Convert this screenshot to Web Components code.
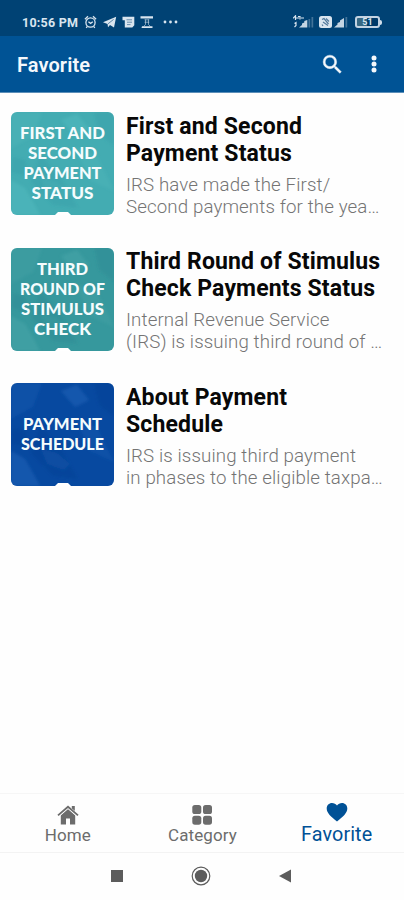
<!DOCTYPE html>
<html lang="en">
<head>
<meta charset="utf-8">
<meta name="viewport" content="width=device-width, initial-scale=1">
<title>Favorite</title>
<style>
    html, body {
        margin: 0;
        height: 100%;
        background: #fefefe;
    }

    body {
        font-family: Roboto, sans-serif;
        overflow: hidden;
    }
</style>
</head>
<body>
<phone-screen>
    <status-bar slot="top" time="10:56 PM" battery="51"></status-bar>
    <app-bar slot="top" heading="Favorite"></app-bar>

    <article-row>
        <article-thumb slot="thumb" theme="teal" lines="FIRST AND:85|SECOND:69|PAYMENT:78|STATUS:62"></article-thumb>
        <span slot="title">First and Second<br>Payment Status</span>
        <span slot="text">IRS have made the First/<br>Second payments for the yea…</span>
    </article-row>
    <article-row>
        <article-thumb slot="thumb" theme="green" lines="THIRD:51|ROUND OF:85|STIMULUS:83|CHECK:57"></article-thumb>
        <span slot="title">Third Round of Stimulus<br>Check Payments Status</span>
        <span slot="text">Internal Revenue Service<br>(IRS) is issuing third round of …</span>
    </article-row>
    <article-row>
        <article-thumb slot="thumb" theme="blue" lines="PAYMENT:79|SCHEDULE:83"></article-thumb>
        <span slot="title">About Payment<br>Schedule</span>
        <span slot="text">IRS is issuing third payment<br>in phases to the eligible taxpa…</span>
    </article-row>

    <tab-bar slot="bottom">
        <tab-item icon="home">Home</tab-item>
        <tab-item icon="grid">Category</tab-item>
        <tab-item icon="heart" active>Favorite</tab-item>
    </tab-bar>
    <system-nav slot="bottom"></system-nav>
</phone-screen>

<script>
class PhoneScreen extends HTMLElement {
    constructor() {
        super();
        this.attachShadow({ mode: 'open' }).innerHTML = `
            <style>
                :host {
                    display: flex;
                    flex-direction: column;
                    height: 100vh;
                }

                main {
                    flex: 1;
                    min-height: 0;
                    padding: 19px 11px 0;
                }
            </style>
            <slot name="top"></slot>
            <main><slot></slot></main>
            <slot name="bottom"></slot>
        `;
    }
}

class StatusBar extends HTMLElement {
    constructor() {
        super();
        this.attachShadow({ mode: 'open' }).innerHTML = `
            <style>
                :host {
                    display: flex;
                    justify-content: space-between;
                    align-items: center;
                    box-sizing: border-box;
                    height: 36px;
                    padding: 8px 22px 0 22px;
                    background: #004274;
                    color: #d9e5ef;
                }

                .side {
                    display: flex;
                    align-items: center;
                }

                .time {
                    width: 62px;
                    font-size: 12.5px;
                    font-weight: 700;
                    letter-spacing: 0.25px;
                    white-space: nowrap;
                }

                svg {
                    display: block;
                    fill: currentColor;
                }

                .battery {
                    display: flex;
                    align-items: center;
                    margin-left: 5px;
                }

                .level {
                    box-sizing: border-box;
                    width: 25px;
                    height: 12px;
                    border: 2px solid #c3d3e2;
                    border-radius: 3px;
                    background: linear-gradient(90deg, #376984 50%, #003a68 50%);
                    font-size: 9px;
                    font-weight: 700;
                    line-height: 8px;
                    text-align: center;
                }

                .tip {
                    width: 2px;
                    height: 5px;
                    background: #d0deea;
                    border-radius: 0 2px 2px 0;
                }
            </style>
            <div class="side">
                <div class="time"></div>
                <svg width="96" height="14" viewBox="0 0 96 14">
                    <g fill="none" stroke="currentColor" stroke-width="1.3">
                        <circle cx="6.5" cy="7.5" r="4.6"/>
                        <path d="M.9 4.2 4 1.3M12.1 4.2 9 1.3M4.4 6.8l2.2 1.6 2.2-1.6M3.4 11.4l-1.2 1.5M9.6 11.4l1.2 1.5"/>
                    </g>
                    <path d="M19 7.3 32.2 1.7 30 12.4l-4-2.3-2 2.1-.4-3.2z"/>
                    <path d="M24 8.8 29.6 4.4" stroke="#285d87" stroke-width=".7"/>
                    <path d="M38.5 1.8h11.8v8.4l-2 2.4h-7.5V5.2h-2.3z"/>
                    <path d="M42.5 4.8h5.5M43 7.2h5M43 9.6h3.5" stroke="#5b84a6" stroke-width=".9"/>
                    <path d="M56.5 1.2H69v2.4H56.5zM58 11.2h10.5V13h-11z"/>
                    <path d="M60.5 4.8h4.8M60.5 7.2h4.8M61.5 4.5v5l-2 2M64.5 4.5v5l2 2" fill="none" stroke="currentColor" stroke-width=".8" opacity=".7"/>
                    <circle cx="81" cy="7" r="1.4"/>
                    <circle cx="86.5" cy="7" r="1.4"/>
                    <circle cx="92" cy="7" r="1.4"/>
                </svg>
            </div>
            <div class="side">
                <svg width="57" height="14" viewBox="0 0 57 14">
                    <path d="M0 3.3 2.5.8V5M3 3h3M5 1.5h2v3M8 3h3M1.5 8.5 3 7.5v3L1.5 12" fill="none" stroke="currentColor" stroke-width="1.2"/>
                    <path d="M6 12.5 9 10V8.5l2.300-1V6l3-1v7.5zM41 12.5l3.500-3V8l2.500-1V5.5L51 3v9.500z" opacity=".9"/>
                    <path d="M15.5 12.5h1.7V4h-1.7zM18.5 12.5h1.7V2h-1.7zM52.5 12.5h1.7V2h-1.7z" opacity=".3"/>
                    <rect x="26" y="1" width="13" height="12" rx="2.5"/>
                    <path d="M29 4.5l2-1 4.5 5.5M30 7l5 3.5M29 9.5l1 1.5M33 3.5l3 3" fill="none" stroke="#52799b" stroke-width="1.2"/>
                </svg>
                <div class="battery"><div class="level"></div><div class="tip"></div></div>
            </div>
        `;
    }

    connectedCallback() {
        this.shadowRoot.querySelector('.time').textContent = this.getAttribute('time');
        this.shadowRoot.querySelector('.level').textContent = this.getAttribute('battery');
    }
}

class AppBar extends HTMLElement {
    constructor() {
        super();
        this.attachShadow({ mode: 'open' }).innerHTML = `
            <style>
                :host {
                    display: flex;
                    align-items: center;
                    box-sizing: border-box;
                    height: 57px;
                    padding: 0 18px 0 17px;
                    background: #005395;
                    border-bottom: 1px solid #5c8fb9;
                    color: #f4f8fc;
                }

                h1 {
                    flex: 1;
                    margin: 0;
                    padding-top: 2px;
                    font-size: 20px;
                    font-weight: 600;
                    letter-spacing: 0.1px;
                }

                svg {
                    display: block;
                }

                .search {
                    margin-right: 17px;
                }
            </style>
            <h1></h1>
            <svg class="search" width="25" height="25" viewBox="0 0 24 24" fill="currentColor" stroke="currentColor" stroke-width=".4">
                <path d="M15.5 14h-.79l-.28-.27A6.47 6.47 0 0 0 16 9.5 6.5 6.5 0 1 0 9.5 16c1.61 0 3.09-.59 4.23-1.57l.27.28v.79l5 4.99L20.49 19l-4.99-5zm-6 0A4.49 4.49 0 0 1 5 9.5 4.49 4.49 0 0 1 9.5 5 4.49 4.49 0 0 1 14 9.5 4.49 4.49 0 0 1 9.5 14z"/>
            </svg>
            <svg width="24" height="24" viewBox="0 0 24 24" fill="currentColor">
                <circle cx="12" cy="6" r="2.5"/>
                <circle cx="12" cy="12" r="2.5"/>
                <circle cx="12" cy="18" r="2.5"/>
            </svg>
        `;
    }

    connectedCallback() {
        this.shadowRoot.querySelector('h1').textContent = this.getAttribute('heading');
    }
}

class ArticleRow extends HTMLElement {
    constructor() {
        super();
        this.attachShadow({ mode: 'open' }).innerHTML = `
            <style>
                :host {
                    display: flex;
                    gap: 12px;
                    height: 135.5px;
                }

                .body {
                    padding-top: 0.6px;
                    white-space: nowrap;
                }

                .title {
                    color: #080808;
                    font-size: 23px;
                    font-weight: 700;
                    line-height: 27.3px;
                    letter-spacing: 0.15px;
                }

                .text {
                    margin-top: 6.8px;
                    color: #747474;
                    font-size: 18.7px;
                    font-weight: 350;
                    line-height: 22px;
                    letter-spacing: 0.12px;
                }
            </style>
            <slot name="thumb"></slot>
            <div class="body">
                <div class="title"><slot name="title"></slot></div>
                <div class="text"><slot name="text"></slot></div>
            </div>
        `;
    }
}

const THEMES = {
    teal: ['#43acb2', '#55bcc0', '#369ca5'],
    green: ['#36989d', '#4aa8ab', '#29868e'],
    blue: ['#0749a0', '#2468bd', '#033d90']
};

class ArticleThumb extends HTMLElement {
    constructor() {
        super();
        this.attachShadow({ mode: 'open' });
    }

    connectedCallback() {
        const [base, light, dark] = THEMES[this.getAttribute('theme')];
        const lines = this.getAttribute('lines').split('|').map(line => line.split(':'));
        // block of lines is centred a little above the middle of the tile
        const first = 56.5 - (lines.length - 1) * 10;
        const text = lines.map(([word, width], i) =>
            `<text x="51.5" y="${first + i * 20}" textLength="${width}" lengthAdjust="spacingAndGlyphs">${word}</text>`
        ).join('');

        this.shadowRoot.innerHTML = `
            <style>
                :host {
                    display: block;
                    flex: none;
                    width: 103px;
                    height: 103px;
                    border-radius: 6px;
                    overflow: hidden;
                    background: ${base};
                }

                svg {
                    display: block;
                }

                text {
                    fill: #f5fcfd;
                    font: 900 17px Lato, sans-serif;
                    text-anchor: middle;
                }
            </style>
            <svg width="103" height="103" viewBox="0 0 103 103">
                <defs><filter id="soft"><feGaussianBlur stdDeviation="1.5"/></filter></defs>
                <g filter="url(#soft)">
                    <path d="M0 68 14 76 22 90 29 103H0zM50 8 66 2 78 17 64 24zM30 66l16 4 13 11-6 6-17-6z" fill="${light}" opacity=".45"/>
                    <path d="M0 0h31l-9 24L0 36zM64 35l22 9 17 35-24-11z" fill="${light}" opacity=".25"/>
                    <path d="M29 42 50 66 67 96 42 93 20 70zM83 0h20v34L88 22zM2 45l12 3 5 17L0 60z" fill="${dark}" opacity=".35"/>
                </g>
                ${text}
                <path d="M44 103l3-3h10l3 3z" fill="#fff"/>
            </svg>
        `;
    }
}

class TabBar extends HTMLElement {
    constructor() {
        super();
        this.attachShadow({ mode: 'open' }).innerHTML = `
            <style>
                :host {
                    display: grid;
                    grid-template-columns: repeat(3, 1fr);
                    box-sizing: border-box;
                    height: 60px;
                    border-top: 1px solid #f6f6f6;
                    border-bottom: 1px solid #f3f3f3;
                }
            </style>
            <slot></slot>
        `;
    }
}

const TAB_ICONS = {
    home: `<path d="M11 3.8 3.8 10v9.5H9v-6h4v6h5.2V10z"/>
        <path d="M14.8 1h3v5l-3-2.6z"/>
        <path d="M1 10.8 11 2.2l10 8.6" fill="none" stroke="#fefefe" stroke-width="3"/>
        <path d="M1 10.4 11 1.7l10 8.7" fill="none" stroke="currentColor" stroke-width="1.8"/>`,
    grid: `<rect x="1.3" y="0" width="9" height="9" rx="2.6"/>
        <rect x="12" y="0" width="9" height="9" rx="2.6"/>
        <rect x="1.3" y="10.7" width="9" height="9" rx="2.6"/>
        <rect x="12" y="10.7" width="9" height="9" rx="2.6"/>`,
    heart: `<path d="M11 19.5C5 14.6.7 11.1.7 6.5.7 3.3 3 1 6 1c2 0 3.9 1 5 2.6C12.1 2 14 1 16 1c3 0 5.3 2.3 5.3 5.5 0 4.6-4.3 8.1-10.3 13z"/>`
};

class TabItem extends HTMLElement {
    constructor() {
        super();
        this.attachShadow({ mode: 'open' });
    }

    connectedCallback() {
        this.shadowRoot.innerHTML = `
            <style>
                :host {
                    display: flex;
                    flex-direction: column;
                    align-items: center;
                    padding-top: 11px;
                    padding-left: 1px;
                    color: #6c6c6c;
                    font-size: 17px;
                    line-height: 20px;
                    letter-spacing: 0.1px;
                }

                :host([active]) {
                    padding-top: 8px;
                    padding-left: 0;
                    color: #005196;
                    font-size: 19.8px;
                    line-height: 25px;
                }

                svg {
                    display: block;
                    fill: currentColor;
                }
            </style>
            <svg width="22" height="20" viewBox="0 0 22 20">${TAB_ICONS[this.getAttribute('icon')]}</svg>
            <slot></slot>
        `;
    }
}

class SystemNav extends HTMLElement {
    constructor() {
        super();
        this.attachShadow({ mode: 'open' }).innerHTML = `
            <style>
                :host {
                    display: flex;
                    justify-content: center;
                    align-items: center;
                    gap: 68px;
                    box-sizing: border-box;
                    height: 47px;
                    padding: 0 2px 2px 0;
                    color: #5c5c5c;
                }

                svg {
                    display: block;
                    fill: currentColor;
                }
            </style>
            <svg width="12" height="12"><rect width="12" height="12"/></svg>
            <svg width="20" height="20">
                <circle cx="10" cy="10" r="8.8" fill="none" stroke="currentColor" stroke-width="1.2"/>
                <circle cx="10" cy="10" r="6.2"/>
            </svg>
            <svg width="12" height="14"><path d="M0 7 12 .5v13z"/></svg>
        `;
    }
}

customElements.define('phone-screen', PhoneScreen);
customElements.define('status-bar', StatusBar);
customElements.define('app-bar', AppBar);
customElements.define('article-row', ArticleRow);
customElements.define('article-thumb', ArticleThumb);
customElements.define('tab-bar', TabBar);
customElements.define('tab-item', TabItem);
customElements.define('system-nav', SystemNav);
</script>
</body>
</html>
